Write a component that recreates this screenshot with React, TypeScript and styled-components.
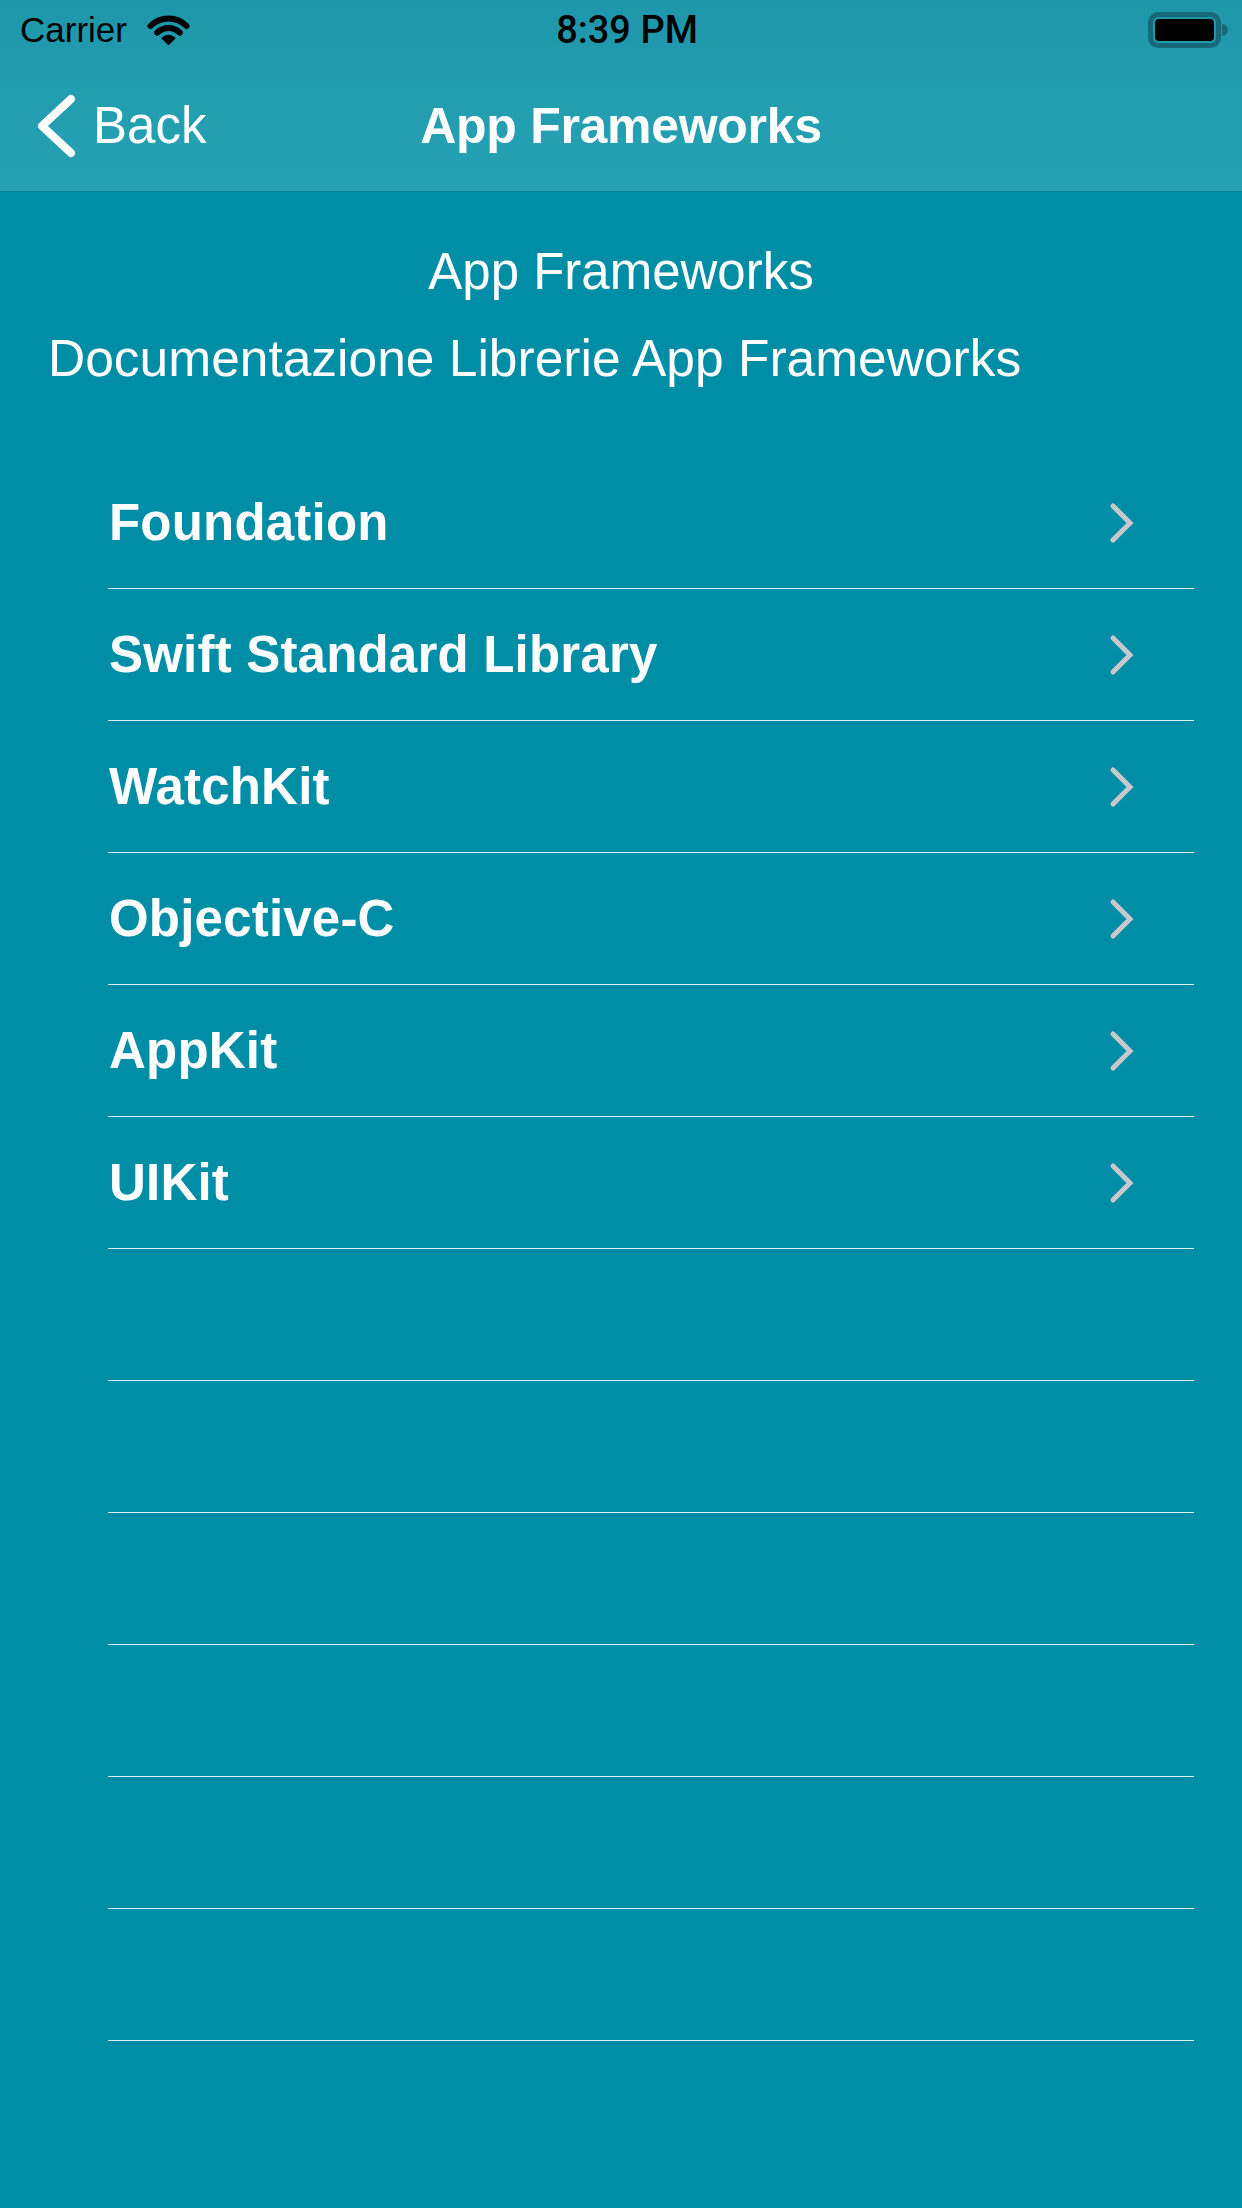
import React from "react";
import styled, { createGlobalStyle } from "styled-components";

const GlobalStyle = createGlobalStyle`
  html, body {
    margin: 0;
    padding: 0;
    background: #008ea6;
  }
  body {
    font-family: "Liberation Sans", Arial, sans-serif;
    -webkit-font-smoothing: antialiased;
  }
  * { box-sizing: border-box; }
`;

const Screen = styled.div`
  width: 1242px;
  min-height: 2208px;
  background: #008ea6;
  display: flex;
  flex-direction: column;
`;

const TopChrome = styled.header`
  background: linear-gradient(180deg, #1e96a9 0%, #239db0 50%, #26a0b3 100%);
  border-bottom: 1px solid #0b7a8b;
`;

const StatusBar = styled.div`
  height: 60px;
  display: grid;
  grid-template-columns: 1fr auto 1fr;
  align-items: center;
  padding: 0 14px 0 20px;
  color: #000;
`;

const StatusLeft = styled.div`
  display: flex;
  align-items: center;
  gap: 20px;
`;

const Carrier = styled.span`
  font-family: "Liberation Sans", Arial, sans-serif;
  font-size: 35px;
  line-height: 40px;
`;

const Clock = styled.span`
  font-family: Roboto, "Liberation Sans", sans-serif;
  font-weight: 500;
  font-size: 38px;
  line-height: 40px;
  padding-left: 6px;
`;

const StatusRight = styled.div`
  display: flex;
  justify-content: flex-end;
  align-items: center;
`;

const NavBar = styled.nav`
  height: 131px;
  display: grid;
  grid-template-columns: 1fr auto 1fr;
  align-items: center;
  color: #fff;
`;

const BackButton = styled.div`
  display: flex;
  align-items: center;
  gap: 15px;
  padding-left: 34px;
  font-size: 51px;
  line-height: 60px;
`;

const NavTitle = styled.h1`
  margin: 0;
  font-size: 50px;
  font-weight: 700;
  line-height: 60px;
  letter-spacing: -0.3px;
`;

const Content = styled.main`
  display: flex;
  flex-direction: column;
  padding-top: 50px;
  color: #fff;
`;

const Heading = styled.div`
  text-align: center;
  font-size: 51px;
  line-height: 60px;
`;

const Subheading = styled.div`
  margin-top: 26px;
  padding-left: 48px;
  font-size: 51.5px;
  line-height: 60px;
`;

const Table = styled.ul`
  list-style: none;
  margin: 69px 48px 0 108px;
  padding: 0;
`;

const Row = styled.li`
  height: 132px;
  display: flex;
  align-items: center;
  justify-content: space-between;
  border-bottom: 1px solid rgba(255, 255, 255, 0.88);
  padding-left: 1px;
  padding-right: 59px;
`;

const RowLabel = styled.span`
  font-size: 51px;
  font-weight: 700;
  line-height: 60px;
  letter-spacing: 0.2px;
  color: #fff;
`;

const ChevronSvg = styled.svg`
  display: block;
  width: 26px;
  height: 42px;
`;

const WifiIcon = () => (
  <svg width="43" height="30" viewBox="0 0 43 30">
    <path d="M3.5 11 A25.5 25.5 0 0 1 39.5 11" fill="none" stroke="#000" strokeWidth="6" strokeLinecap="round" />
    <path d="M10.2 17.7 A16 16 0 0 1 32.8 17.7" fill="none" stroke="#000" strokeWidth="6" strokeLinecap="round" />
    <path d="M21.5 29 L15.7 23.2 A8 8 0 0 1 27.3 23.2 Z" fill="#000" stroke="#000" strokeWidth="2" strokeLinejoin="round" />
  </svg>
);

const BatteryIcon = () => (
  <svg width="80" height="36" viewBox="0 0 80 36">
    <rect x="2.5" y="2.5" width="68" height="31" rx="8" fill="none" stroke="#17697a" strokeWidth="5" />
    <rect x="7" y="7" width="59" height="22" rx="4" fill="#000" />
    <path d="M74 12 A6 6 0 0 1 74 24 Z" fill="#17697a" />
  </svg>
);

const BackChevron = () => (
  <svg width="44" height="70" viewBox="0 0 44 70">
    <polyline points="37,8 8,35 37,62" fill="none" stroke="#fff" strokeWidth="8" strokeLinecap="round" strokeLinejoin="round" />
  </svg>
);

const Disclosure = () => (
  <ChevronSvg viewBox="0 0 26 42">
    <polyline points="4,4 21,21 4,38" fill="none" stroke="#c8c8cc" strokeWidth="5" strokeLinecap="round" strokeLinejoin="miter" />
  </ChevronSvg>
);

const items: (string | null)[] = [
  "Foundation",
  "Swift Standard Library",
  "WatchKit",
  "Objective-C",
  "AppKit",
  "UIKit",
  null,
  null,
  null,
  null,
  null,
  null,
];

export default function App() {
  return (
    <>
      <GlobalStyle />
      <Screen>
        <TopChrome>
          <StatusBar>
            <StatusLeft>
              <Carrier>Carrier</Carrier>
              <WifiIcon />
            </StatusLeft>
            <Clock>8:39 PM</Clock>
            <StatusRight>
              <BatteryIcon />
            </StatusRight>
          </StatusBar>
          <NavBar>
            <BackButton>
              <BackChevron />
              <span>Back</span>
            </BackButton>
            <NavTitle>App Frameworks</NavTitle>
            <div />
          </NavBar>
        </TopChrome>
        <Content>
          <Heading>App Frameworks</Heading>
          <Subheading>Documentazione Librerie App Frameworks</Subheading>
          <Table>
            {items.map((label, i) => (
              <Row key={i}>
                {label ? (
                  <>
                    <RowLabel>{label}</RowLabel>
                    <Disclosure />
                  </>
                ) : null}
              </Row>
            ))}
          </Table>
        </Content>
      </Screen>
    </>
  );
}
